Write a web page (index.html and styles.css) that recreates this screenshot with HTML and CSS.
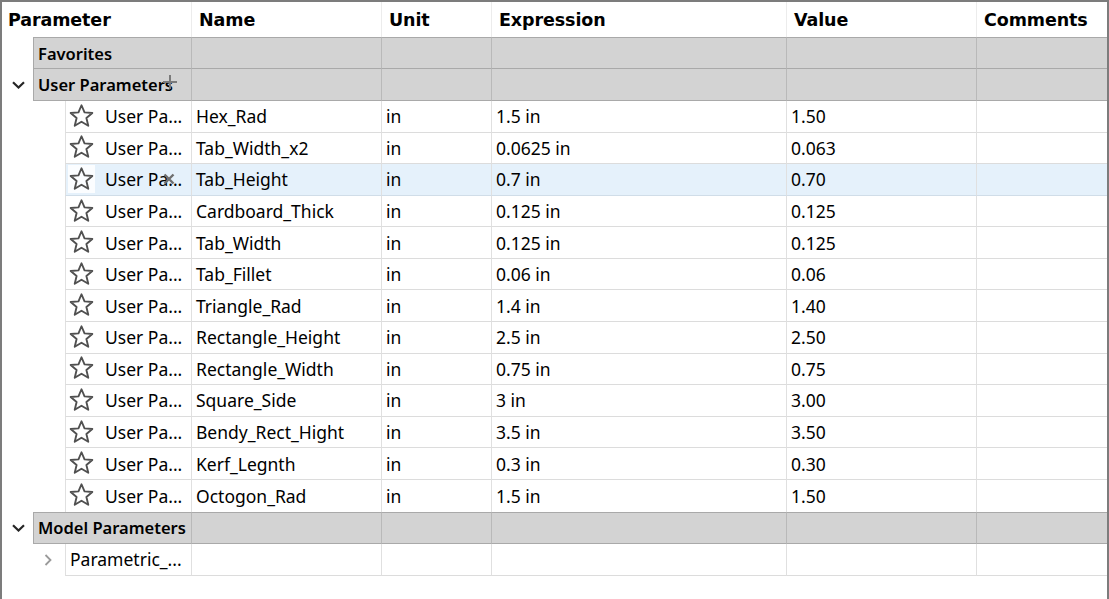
FILE: index.html
```html
<!DOCTYPE html>
<html>
<head>
<meta charset="utf-8">
<link rel="stylesheet" href="styles.css">
</head>
<body>
<div class="table">
  <div class="row head">
    <div class="ind"></div>
    <div class="c c1">Parameter</div>
    <div class="c">Name</div>
    <div class="c">Unit</div>
    <div class="c">Expression</div>
    <div class="c">Value</div>
    <div class="c">Comments</div>
  </div>

  <div class="row group first">
    <div class="ind"></div>
    <div class="c c1">Favorites</div>
    <div class="c"></div><div class="c"></div><div class="c"></div><div class="c"></div><div class="c"></div>
  </div>

  <div class="row group">
    <div class="ind"><svg class="chev" width="13" height="8" viewBox="0 0 13 8"><path d="M1 1.2 L6.5 6.5 L12 1.2" fill="none" stroke="#262626" stroke-width="2.2"/></svg></div>
    <div class="c c1">User Parameters</div>
    <div class="c"></div><div class="c"></div><div class="c"></div><div class="c"></div><div class="c"></div>
    <svg class="plus" width="14" height="14" viewBox="0 0 14 14"><path d="M7 0 V14 M0 7 H14" stroke="#7a7a7a" stroke-width="2"/></svg>
  </div>

  <div class="row data"><div class="ind"></div><div class="c c1"><span class="star"><svg width="25" height="25" viewBox="0 0 24 24"><polygon points="12,1.2 14.9,8 22.4,8.6 16.7,13.5 18.5,20.9 12,17 5.5,20.9 7.3,13.5 1.6,8.6 9.1,8" fill="none" stroke="#505050" stroke-width="1.8" stroke-linejoin="round"/></svg></span>User Pa...</div><div class="c">Hex_Rad</div><div class="c">in</div><div class="c">1.5 in</div><div class="c">1.50</div><div class="c"></div></div>

  <div class="row data"><div class="ind"></div><div class="c c1"><span class="star"><svg width="25" height="25" viewBox="0 0 24 24"><polygon points="12,1.2 14.9,8 22.4,8.6 16.7,13.5 18.5,20.9 12,17 5.5,20.9 7.3,13.5 1.6,8.6 9.1,8" fill="none" stroke="#505050" stroke-width="1.8" stroke-linejoin="round"/></svg></span>User Pa...</div><div class="c">Tab_Width_x2</div><div class="c">in</div><div class="c">0.0625 in</div><div class="c">0.063</div><div class="c"></div></div>

  <div class="row data sel"><div class="ind"></div><div class="c c1"><span class="star"><svg width="25" height="25" viewBox="0 0 24 24"><polygon points="12,1.2 14.9,8 22.4,8.6 16.7,13.5 18.5,20.9 12,17 5.5,20.9 7.3,13.5 1.6,8.6 9.1,8" fill="none" stroke="#505050" stroke-width="1.8" stroke-linejoin="round"/></svg></span>User Pa...</div><div class="c">Tab_Height</div><div class="c">in</div><div class="c">0.7 in</div><div class="c">0.70</div><div class="c"></div>
    <svg class="cross" width="12" height="12" viewBox="0 0 12 12"><path d="M1.5 1.5 L10.5 10.5 M10.5 1.5 L1.5 10.5" stroke="#6f6f6f" stroke-width="2.4"/></svg>
  </div>

  <div class="row data"><div class="ind"></div><div class="c c1"><span class="star"><svg width="25" height="25" viewBox="0 0 24 24"><polygon points="12,1.2 14.9,8 22.4,8.6 16.7,13.5 18.5,20.9 12,17 5.5,20.9 7.3,13.5 1.6,8.6 9.1,8" fill="none" stroke="#505050" stroke-width="1.8" stroke-linejoin="round"/></svg></span>User Pa...</div><div class="c">Cardboard_Thick</div><div class="c">in</div><div class="c">0.125 in</div><div class="c">0.125</div><div class="c"></div></div>

  <div class="row data"><div class="ind"></div><div class="c c1"><span class="star"><svg width="25" height="25" viewBox="0 0 24 24"><polygon points="12,1.2 14.9,8 22.4,8.6 16.7,13.5 18.5,20.9 12,17 5.5,20.9 7.3,13.5 1.6,8.6 9.1,8" fill="none" stroke="#505050" stroke-width="1.8" stroke-linejoin="round"/></svg></span>User Pa...</div><div class="c">Tab_Width</div><div class="c">in</div><div class="c">0.125 in</div><div class="c">0.125</div><div class="c"></div></div>

  <div class="row data"><div class="ind"></div><div class="c c1"><span class="star"><svg width="25" height="25" viewBox="0 0 24 24"><polygon points="12,1.2 14.9,8 22.4,8.6 16.7,13.5 18.5,20.9 12,17 5.5,20.9 7.3,13.5 1.6,8.6 9.1,8" fill="none" stroke="#505050" stroke-width="1.8" stroke-linejoin="round"/></svg></span>User Pa...</div><div class="c">Tab_Fillet</div><div class="c">in</div><div class="c">0.06 in</div><div class="c">0.06</div><div class="c"></div></div>

  <div class="row data"><div class="ind"></div><div class="c c1"><span class="star"><svg width="25" height="25" viewBox="0 0 24 24"><polygon points="12,1.2 14.9,8 22.4,8.6 16.7,13.5 18.5,20.9 12,17 5.5,20.9 7.3,13.5 1.6,8.6 9.1,8" fill="none" stroke="#505050" stroke-width="1.8" stroke-linejoin="round"/></svg></span>User Pa...</div><div class="c">Triangle_Rad</div><div class="c">in</div><div class="c">1.4 in</div><div class="c">1.40</div><div class="c"></div></div>

  <div class="row data"><div class="ind"></div><div class="c c1"><span class="star"><svg width="25" height="25" viewBox="0 0 24 24"><polygon points="12,1.2 14.9,8 22.4,8.6 16.7,13.5 18.5,20.9 12,17 5.5,20.9 7.3,13.5 1.6,8.6 9.1,8" fill="none" stroke="#505050" stroke-width="1.8" stroke-linejoin="round"/></svg></span>User Pa...</div><div class="c">Rectangle_Height</div><div class="c">in</div><div class="c">2.5 in</div><div class="c">2.50</div><div class="c"></div></div>

  <div class="row data"><div class="ind"></div><div class="c c1"><span class="star"><svg width="25" height="25" viewBox="0 0 24 24"><polygon points="12,1.2 14.9,8 22.4,8.6 16.7,13.5 18.5,20.9 12,17 5.5,20.9 7.3,13.5 1.6,8.6 9.1,8" fill="none" stroke="#505050" stroke-width="1.8" stroke-linejoin="round"/></svg></span>User Pa...</div><div class="c">Rectangle_Width</div><div class="c">in</div><div class="c">0.75 in</div><div class="c">0.75</div><div class="c"></div></div>

  <div class="row data"><div class="ind"></div><div class="c c1"><span class="star"><svg width="25" height="25" viewBox="0 0 24 24"><polygon points="12,1.2 14.9,8 22.4,8.6 16.7,13.5 18.5,20.9 12,17 5.5,20.9 7.3,13.5 1.6,8.6 9.1,8" fill="none" stroke="#505050" stroke-width="1.8" stroke-linejoin="round"/></svg></span>User Pa...</div><div class="c">Square_Side</div><div class="c">in</div><div class="c">3 in</div><div class="c">3.00</div><div class="c"></div></div>

  <div class="row data"><div class="ind"></div><div class="c c1"><span class="star"><svg width="25" height="25" viewBox="0 0 24 24"><polygon points="12,1.2 14.9,8 22.4,8.6 16.7,13.5 18.5,20.9 12,17 5.5,20.9 7.3,13.5 1.6,8.6 9.1,8" fill="none" stroke="#505050" stroke-width="1.8" stroke-linejoin="round"/></svg></span>User Pa...</div><div class="c">Bendy_Rect_Hight</div><div class="c">in</div><div class="c">3.5 in</div><div class="c">3.50</div><div class="c"></div></div>

  <div class="row data"><div class="ind"></div><div class="c c1"><span class="star"><svg width="25" height="25" viewBox="0 0 24 24"><polygon points="12,1.2 14.9,8 22.4,8.6 16.7,13.5 18.5,20.9 12,17 5.5,20.9 7.3,13.5 1.6,8.6 9.1,8" fill="none" stroke="#505050" stroke-width="1.8" stroke-linejoin="round"/></svg></span>User Pa...</div><div class="c">Kerf_Legnth</div><div class="c">in</div><div class="c">0.3 in</div><div class="c">0.30</div><div class="c"></div></div>

  <div class="row data last"><div class="ind"></div><div class="c c1"><span class="star"><svg width="25" height="25" viewBox="0 0 24 24"><polygon points="12,1.2 14.9,8 22.4,8.6 16.7,13.5 18.5,20.9 12,17 5.5,20.9 7.3,13.5 1.6,8.6 9.1,8" fill="none" stroke="#505050" stroke-width="1.8" stroke-linejoin="round"/></svg></span>User Pa...</div><div class="c">Octogon_Rad</div><div class="c">in</div><div class="c">1.5 in</div><div class="c">1.50</div><div class="c"></div></div>

  <div class="row group model">
    <div class="ind"><svg class="chev" width="13" height="8" viewBox="0 0 13 8"><path d="M1 1.2 L6.5 6.5 L12 1.2" fill="none" stroke="#262626" stroke-width="2.2"/></svg></div>
    <div class="c c1">Model Parameters</div>
    <div class="c"></div><div class="c"></div><div class="c"></div><div class="c"></div><div class="c"></div>
  </div>

  <div class="row data sub">
    <div class="ind"><svg width="8" height="12" viewBox="0 0 8 12"><path d="M1.5 1 L6.5 6 L1.5 11" fill="none" stroke="#9a9a9a" stroke-width="1.8"/></svg></div>
    <div class="c c1">Parametric_...</div>
    <div class="c"></div><div class="c"></div><div class="c"></div><div class="c"></div><div class="c"></div>
  </div>
</div>
</body>
</html>
```

FILE: styles.css
```css
html, body {
  margin: 0;
  padding: 0;
  background: #fff;
}
body {
  width: 1109px;
  height: 599px;
  overflow: hidden;
}
.table {
  box-sizing: border-box;
  width: 1109px;
  height: 599px;
  border: 2px solid #7c7c7c;
  border-bottom: none;
  font-family: "Noto Sans", "DejaVu Sans", sans-serif;
  font-size: 17.5px;
  color: #000;
}
.row {
  position: relative;
  display: grid;
  grid-template-columns: var(--ind, 0px) 1fr 190px 110px 295px 190px 131px;
  box-sizing: border-box;
}
.ind {
  display: flex;
  align-items: center;
  justify-content: center;
}
.c {
  box-sizing: border-box;
  display: flex;
  align-items: center;
  white-space: nowrap;
  overflow: hidden;
  border-left: 1px solid #e2e2e2;
  padding-left: 4px;
}

/* header */
.head {
  height: 35px;
  font-family: "DejaVu Sans", sans-serif;
  font-weight: bold;
  font-size: 17.5px;
  letter-spacing: -0.1px;
}
.head .c {
  padding-left: 7px;
  border-left-color: #ececec;
}
.head .c1 {
  border-left: none;
  padding-left: 6px;
}

/* group rows */
.group {
  --ind: 31px;
  height: 32px;
  font-weight: 600;
  font-size: 16.5px;
}
.group .c {
  background: #d3d3d3;
  border-bottom: 1px solid #a9a9a9;
  border-left-color: #b9b9b9;
}
.group .c1 {
  border-left-color: #a9a9a9;
}
.group.first .c {
  border-top: 1px solid #a9a9a9;
}
.group.model .c {
  border-top: 1px solid #a9a9a9;
}
.group .ind {
  padding-left: 2px;
}

/* data rows */
.data {
  --ind: 63px;
  height: 31.58px;
}
.data .c {
  border-bottom: 1px solid #dcdcdc;
  border-left-color: #e0e0e0;
}
.data .c1 {
  padding-left: 2px;
}
.data.last .c {
  border-bottom: none;
}
.star {
  display: flex;
  align-items: center;
  justify-content: center;
  width: 27px;
  height: 28px;
  margin-right: 10px;
}
.sel .c {
  background: #e5f1fb;
  border-bottom-color: #d0dde8;
}
.sel .star {
  background: #fbfdff;
}
.sub {
  height: 32px;
}
.sub .c {
  border-bottom: 1px solid #dcdcdc;
}
.sub .c1 {
  padding-left: 4px;
}
.sub .ind {
  justify-content: flex-end;
  padding-right: 13px;
}

/* overlay cursor marks */
.plus {
  position: absolute;
  left: 161px;
  top: 6px;
}
.cross {
  position: absolute;
  left: 161px;
  top: 9px;
}
```
